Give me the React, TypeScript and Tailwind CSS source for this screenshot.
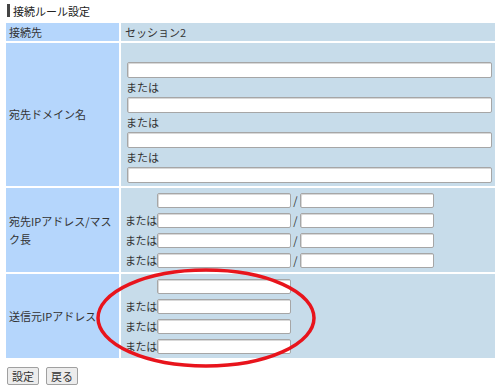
import React from "react";

const font = { fontFamily: '"Noto Sans CJK JP", "Noto Sans", sans-serif' };

function Input({ w }: { w: string }) {
  return (
    <div
      className={`${w} h-[15px] bg-white border border-[#a6a6a6] rounded-[2px] shadow-[inset_1px_1px_0_#d8d8d8]`}
    />
  );
}

function IpLine({ label, mask }: { label: boolean; mask: boolean }) {
  return (
    <div className="flex items-center h-[15px]">
      <div className="w-[32px] text-[11px] tracking-[-0.4px] leading-[15px] text-[#333] whitespace-nowrap">
        {label ? "または" : ""}
      </div>
      <Input w="w-[134px]" />
      {mask && (
        <>
          <div className="w-[9px] text-center text-[11px] leading-[15px] text-[#333]">/</div>
          <Input w="w-[134px]" />
        </>
      )}
    </div>
  );
}

export default function App() {
  return (
    <div className="relative w-[500px] h-[391px] bg-white text-[#333] text-[11px]" style={font}>
      <div className="flex items-center h-[23px] pl-[7px] pb-[2px]">
        <div className="w-[3px] h-[13px] bg-[#444]" />
        <div className="ml-[3px] text-[11px] leading-[14px] text-[#222]">接続ルール設定</div>
      </div>
      <div className="ml-[6px] w-[489px] flex flex-col gap-[2px]">
        <div className="flex gap-[2px]">
          <div className="w-[113px] bg-[#b5d6fc] pl-[3px] h-[18px] leading-[18px]">接続先</div>
          <div className="flex-1 bg-[#c7dcea] pl-[4px] h-[18px] leading-[18px]">セッション2</div>
        </div>
        <div className="flex gap-[2px]">
          <div className="w-[113px] bg-[#b5d6fc] pl-[3px] flex items-center">宛先ドメイン名</div>
          <div className="flex-1 bg-[#c7dcea] pl-[5px] pr-[3px] pt-[19px] pb-[3px] flex flex-col">
            <div className="ml-[1px]"><Input w="w-full h-[16px]" /></div>
            <div className="leading-[19px]">または</div>
            <div className="ml-[1px]"><Input w="w-full h-[16px]" /></div>
            <div className="leading-[19px]">または</div>
            <div className="ml-[1px]"><Input w="w-full h-[16px]" /></div>
            <div className="leading-[19px]">または</div>
            <div className="ml-[1px]"><Input w="w-full h-[16px]" /></div>
          </div>
        </div>
        <div className="flex gap-[2px]">
          <div className="w-[113px] bg-[#b5d6fc] pl-[3px] flex items-center leading-[18px]">
            <div className="whitespace-nowrap">宛先IPアドレス/マス<br />ク長</div>
          </div>
          <div className="flex-1 bg-[#c7dcea] pl-[4px] pt-[5px] pb-[4px] flex flex-col gap-[5px]">
            <IpLine label={false} mask />
            <IpLine label mask />
            <IpLine label mask />
            <IpLine label mask />
          </div>
        </div>
        <div className="flex gap-[2px]">
          <div className="w-[113px] bg-[#b5d6fc] pl-[3px] flex items-center">送信元IPアドレス</div>
          <div className="flex-1 bg-[#c7dcea] pl-[4px] pt-[5px] pb-[4px] flex flex-col gap-[5px]">
            <IpLine label={false} mask={false} />
            <IpLine label mask={false} />
            <IpLine label mask={false} />
            <IpLine label mask={false} />
          </div>
        </div>
      </div>
      <div className="flex gap-[7px] ml-[7px] mt-[9px]">
        <button className="w-[32px] h-[18px] bg-[#ececec] border border-[#a0a0a0] rounded-[2px] text-[11px] leading-[16px] text-[#333]" style={font}>設定</button>
        <button className="w-[32px] h-[18px] bg-[#ececec] border border-[#a0a0a0] rounded-[2px] text-[11px] leading-[16px] text-[#333]" style={font}>戻る</button>
      </div>
      <svg className="absolute left-0 top-0 pointer-events-none" width="500" height="391">
        <ellipse cx="206" cy="318" rx="108" ry="48" fill="none" stroke="#e8141c" strokeWidth="3.5" />
      </svg>
    </div>
  );
}
